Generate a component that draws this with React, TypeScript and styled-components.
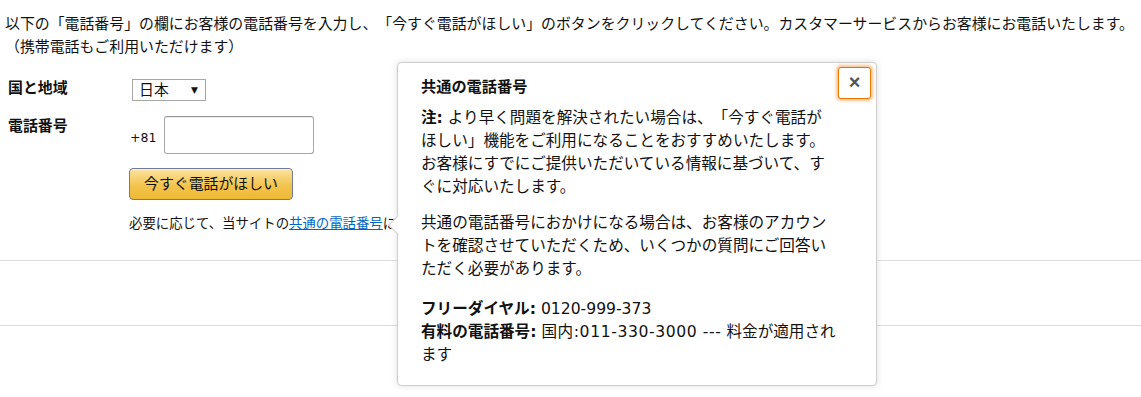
import React from "react";
import styled, { createGlobalStyle } from "styled-components";

const GlobalStyle = createGlobalStyle`
  html, body { margin: 0; padding: 0; background: #fff; }
  body {
    font-family: "DejaVu Sans", "Noto Sans CJK JP", sans-serif;
    color: #111;
    text-spacing-trim: space-all;
    -webkit-font-smoothing: antialiased;
  }
`;

const Page = styled.div`
  position: relative;
  width: 1141px;
  height: 397px;
  overflow: hidden;
`;

const Intro = styled.p`
  margin: 0;
  padding: 12.5px 0 0 5px;
  font-size: 14.9px;
  line-height: 23px;
  white-space: nowrap;
`;

const Form = styled.div`
  display: flex;
  flex-direction: column;
  padding-left: 8px;
  margin-top: 19.5px;
`;

const FieldRow = styled.div<{ $gap?: number }>`
  display: flex;
  align-items: flex-start;
  margin-top: ${(p) => p.$gap ?? 0}px;
`;

const Label = styled.div`
  width: 121px;
  flex: none;
  font-size: 14.9px;
  font-weight: 700;
  line-height: 20px;
`;

const Controls = styled.div`
  display: flex;
  align-items: center;
`;

const SelectBox = styled.div`
  box-sizing: border-box;
  margin: 1px 0 0 3px;
  width: 74px;
  height: 22px;
  border: 1px solid #a6a6a6;
  background: #fff;
  display: flex;
  align-items: center;
  justify-content: space-between;
  padding: 0 7px 0 6px;
  font-size: 14.9px;
  line-height: 20px;
`;

const Caret = styled.span`
  font-size: 9px;
  line-height: 1;
  color: #111;
`;

const Prefix = styled.span`
  font-size: 12.5px;
  line-height: 20px;
  margin: 6px 8px 0 1px;
`;

const PhoneInput = styled.input`
  box-sizing: border-box;
  width: 150px;
  height: 38px;
  border: 1px solid #a6a6a6;
  border-top-color: #949494;
  border-radius: 3px;
  box-shadow: 0 1px 0 rgba(255, 255, 255, 0.5), 0 1px 0 rgba(0, 0, 0, 0.07) inset;
  outline: none;
  padding: 0 7px;
  font: inherit;
`;

const CallButton = styled.button`
  box-sizing: border-box;
  margin-left: 121px;
  width: 164px;
  height: 32px;
  border: 1px solid #6f7c98;
  border-radius: 4px;
  background: linear-gradient(to bottom, #fbe3a3, #f3c44e 55%, #eeb933);
  box-shadow: 0 1px 0 rgba(255, 255, 255, 0.5) inset;
  font-family: inherit;
  font-size: 14.9px;
  line-height: 20px;
  color: #111;
  padding: 0;
  cursor: pointer;
`;

const Note = styled.p`
  margin: 14px 0 0 121px;
  font-size: 13.4px;
  line-height: 20px;
  white-space: nowrap;
`;

const Link = styled.a`
  color: #0066c0;
  text-decoration: underline;
`;

const Divider = styled.hr<{ $gap: number }>`
  margin: ${(p) => p.$gap}px 0 0 0;
  border: none;
  border-top: 1px solid #dddddd;
  height: 0;
`;

const Popover = styled.div`
  position: absolute;
  left: 397px;
  top: 62px;
  width: 480px;
  box-sizing: border-box;
  background: #fff;
  border: 1px solid #cfcfcf;
  border-radius: 4px;
  box-shadow: 0 0 6px rgba(0, 0, 0, 0.13);
  padding: 12.5px 24px 18px 23px;

  &::before {
    content: "";
    position: absolute;
    left: -7.5px;
    top: 155px;
    width: 13px;
    height: 13px;
    background: #fff;
    border-left: 1px solid #cfcfcf;
    border-bottom: 1px solid #cfcfcf;
    transform: rotate(45deg);
  }
`;

const CloseButton = styled.button`
  position: absolute;
  top: 4px;
  right: 5px;
  box-sizing: border-box;
  width: 33px;
  height: 32px;
  border: 1px solid #e77600;
  border-radius: 3px;
  background: #fff;
  box-shadow: 0 0 3px 2px rgba(228, 121, 17, 0.45);
  color: #555;
  font-family: "Liberation Sans", sans-serif;
  font-size: 20px;
  font-weight: 700;
  line-height: 1;
  padding: 0 0 2px 0;
  display: flex;
  align-items: center;
  justify-content: center;
`;

const PopTitle = styled.h4`
  margin: 0 0 8px 0;
  font-size: 15.2px;
  font-weight: 700;
  line-height: 23px;
  color: #111;
`;

const PopText = styled.p<{ $gap?: number }>`
  margin: ${(p) => p.$gap ?? 0}px 0 0 0;
  font-size: 15.6px;
  line-height: 23.3px;
  white-space: nowrap;
  color: #111;
`;

const Wide = styled.span`
  letter-spacing: 0.6px;
`;

export default function App() {
  return (
    <Page>
      <GlobalStyle />
      <Intro>
        以下の「電話番号」の欄にお客様の電話番号を入力し、「今すぐ電話がほしい」のボタンをクリックしてください。カスタマーサービスからお客様にお電話いたします。
        <br />
        （携帯電話もご利用いただけます）
      </Intro>
      <Form>
        <FieldRow>
          <Label>国と地域</Label>
          <SelectBox>
            <span>日本</span>
            <Caret>▼</Caret>
          </SelectBox>
        </FieldRow>
        <FieldRow $gap={15}>
          <Label>電話番号</Label>
          <Controls>
            <Prefix>+81</Prefix>
            <PhoneInput type="tel" aria-label="電話番号" />
          </Controls>
        </FieldRow>
        <FieldRow $gap={14}>
          <CallButton>今すぐ電話がほしい</CallButton>
        </FieldRow>
        <Note>
          必要に応じて、当サイトの<Link href="#">共通の電話番号</Link>に
        </Note>
      </Form>
      <Divider $gap={26} />
      <Divider $gap={64} />
      <Popover>
        <CloseButton aria-label="閉じる">×</CloseButton>
        <PopTitle>共通の電話番号</PopTitle>
        <PopText>
          <b>注:</b> より早く問題を解決されたい場合は、「今すぐ電話が
          <br />
          ほしい」機能をご利用になることをおすすめいたします。
          <br />
          お客様にすでにご提供いただいている情報に基づいて、す
          <br />
          ぐに対応いたします。
        </PopText>
        <PopText $gap={12}>
          共通の電話番号におかけになる場合は、お客様のアカウン
          <br />
          トを確認させていただくため、いくつかの質問にご回答い
          <br />
          ただく必要があります。
        </PopText>
        <PopText $gap={16}>
          <b>フリーダイヤル:</b> 0120-999-373
          <br />
          <b>有料の電話番号:</b> <Wide>国内:011-330-3000 ---</Wide> 料金が適用され
          <br />
          ます
        </PopText>
      </Popover>
    </Page>
  );
}
